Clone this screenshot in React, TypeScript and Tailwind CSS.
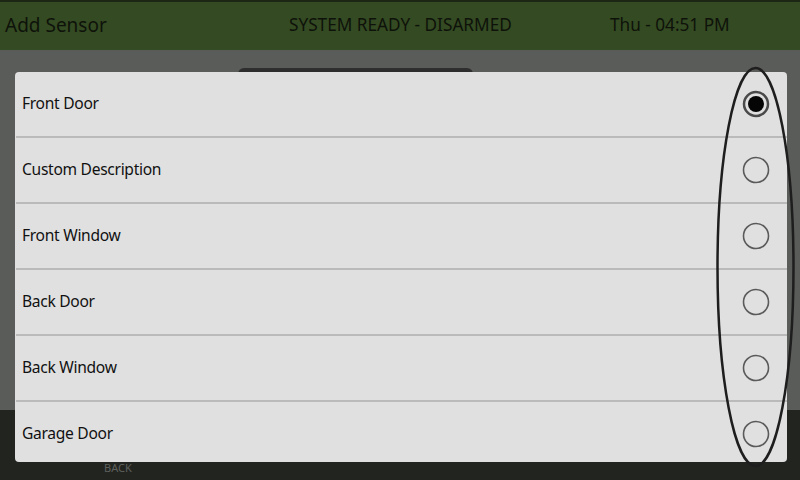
import React from "react";

const items = [
  "Front Door",
  "Custom Description",
  "Front Window",
  "Back Door",
  "Back Window",
  "Garage Door",
];

function Radio({ checked }: { checked: boolean }) {
  return (
    <svg width="28" height="28" viewBox="0 0 28 28">
      {checked ? (
        <>
          <circle cx="14" cy="14" r="12" fill="none" stroke="#4a4a4a" strokeWidth="2.5" />
          <circle cx="14" cy="14" r="8" fill="#050505" />
        </>
      ) : (
        <circle cx="14" cy="14" r="12.5" fill="none" stroke="#5a5a5a" strokeWidth="1.6" />
      )}
    </svg>
  );
}

export default function App() {
  return (
    <div
      className="relative w-[800px] h-[480px] overflow-hidden flex flex-col bg-[#5a5c59]"
      style={{ fontFamily: '"Noto Sans", "Open Sans", sans-serif' }}
    >
      <div className="h-[50px] bg-[#344a22] border-t-2 border-[#1c2614] flex items-center text-[#0e120a] pb-[2px]">
        <div className="w-[230px] pl-[5px] text-[19px]">Add Sensor</div>
        <div className="w-[380px] pl-[59px] text-[17.2px]">SYSTEM READY - DISARMED</div>
        <div className="flex-1 text-[17.2px]">Thu - 04:51 PM</div>
      </div>
      <div className="flex-1 bg-[#5a5c59] flex justify-center pt-[18px]">
        <div className="ml-[-89px] w-[235px] h-[8px] rounded-t-[6px] bg-[#2e2e2e]" />
      </div>
      <div className="h-[70px] bg-[#222420] flex items-end">
        <div className="pl-[104px] pb-[4px] text-[11px] text-[#5e605c]">BACK</div>
      </div>

      <div className="absolute left-[15px] top-[72px] w-[772px] h-[390px] bg-[#e0e0e0] rounded-[4px] overflow-hidden flex flex-col">
        {items.map((label, i) => (
          <div key={label} className="flex flex-col shrink-0">
            <div className="h-[64px] flex items-center justify-between pl-[7px] pr-[17px]">
              <span className="text-[15.6px] tracking-[-0.3px] text-[#111111]">{label}</span>
              <Radio checked={i === 0} />
            </div>
            {i < items.length - 1 && <div className="h-[2px] ml-[1px] bg-[#bababa]" />}
          </div>
        ))}
      </div>

      <svg className="absolute left-0 top-0 pointer-events-none" width="800" height="480">
        <ellipse cx="755.5" cy="267" rx="38" ry="199" fill="none" stroke="#1e1e1e" strokeWidth="2.5" />
      </svg>
    </div>
  );
}
